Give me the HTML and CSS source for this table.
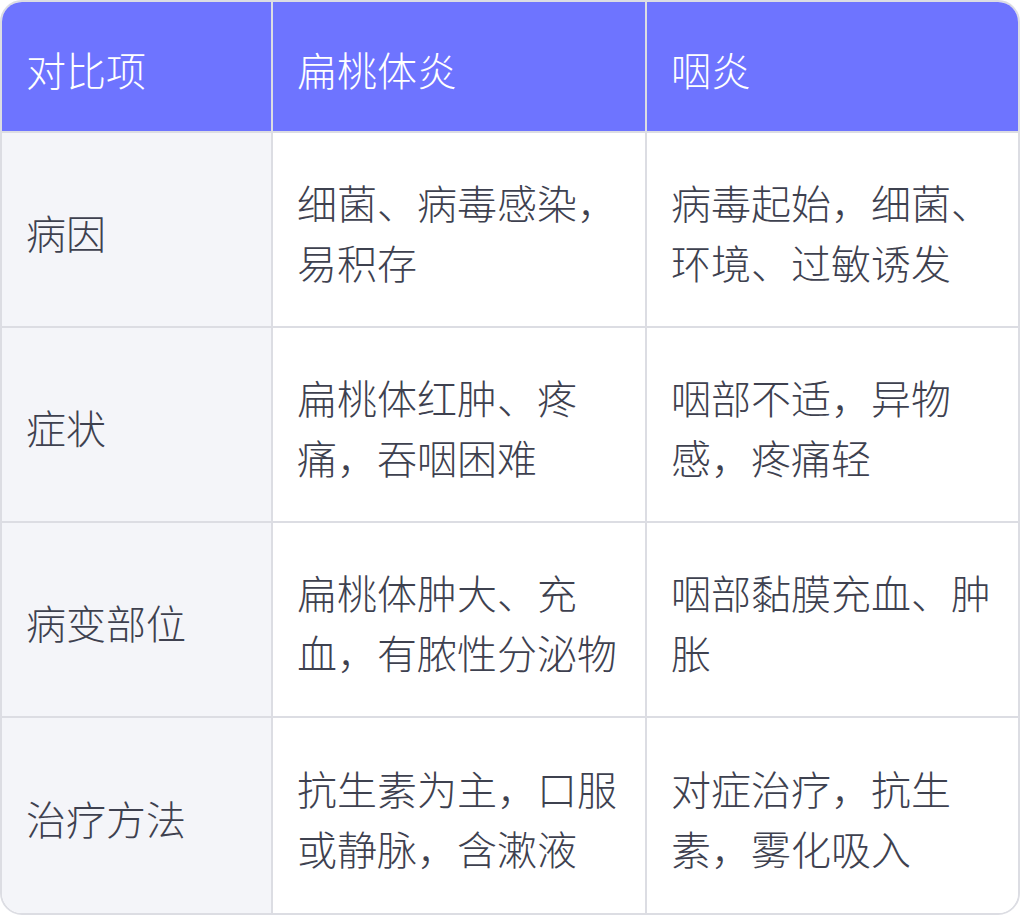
FILE: index.html
```html
<!DOCTYPE html>
<html lang="zh-CN">
<head>
<meta charset="utf-8">
<link rel="stylesheet" href="styles.css">
</head>
<body>
<div class="table">
  <div class="cell head c1">对比项</div>
  <div class="cell head c2">扁桃体炎</div>
  <div class="cell head c3">咽炎</div>

  <div class="cell label c1">病因</div>
  <div class="cell c2">细菌、病毒感染，易积存</div>
  <div class="cell c3">病毒起始，细菌、环境、过敏诱发</div>

  <div class="cell label c1">症状</div>
  <div class="cell c2">扁桃体红肿、疼痛，吞咽困难</div>
  <div class="cell c3">咽部不适，异物感，疼痛轻</div>

  <div class="cell label c1">病变部位</div>
  <div class="cell c2">扁桃体肿大、充血，有脓性分泌物</div>
  <div class="cell c3">咽部黏膜充血、肿胀</div>

  <div class="cell label c1 last">治疗方法</div>
  <div class="cell c2 last">抗生素为主，口服或静脉，含漱液</div>
  <div class="cell c3 last">对症治疗，抗生素，雾化吸入</div>
</div>
</body>
</html>
```

FILE: styles.css
```css
html, body {
  margin: 0;
  padding: 0;
  background: #ffffff;
}

.table {
  width: 1020px;
  height: 915px;
  box-sizing: border-box;
  border: 2px solid #dcdde3;
  border-radius: 22px;
  overflow: hidden;
  display: grid;
  grid-template-columns: 271px 374px 371px;
  grid-template-rows: 131px 195px 195px 195px 1fr;
  font-family: "Noto Sans CJK SC", "Noto Sans", sans-serif;
  font-weight: 300;
  font-size: 40px;
  line-height: 60px;
  color: #3e414f;
}

.cell {
  box-sizing: border-box;
  display: flex;
  align-items: center;
  padding: 5px 22px 0 24px;
  border-right: 2px solid #dcdde3;
  border-bottom: 2px solid #dcdde3;
  background: #ffffff;
}

.cell.c3 {
  border-right: none;
}

.cell.last {
  border-bottom: none;
}

.cell.head {
  background: #6e74ff;
  color: #ffffff;
  padding-top: 4px;
}

.cell.label {
  background: #f4f5f9;
}
```
